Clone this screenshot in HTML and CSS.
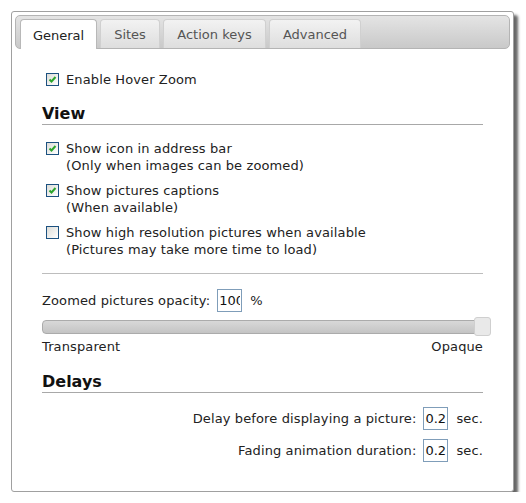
FILE: index.html
```html
<!DOCTYPE html>
<html>
<head>
<meta charset="utf-8">
<link rel="stylesheet" href="styles.css">
</head>
<body>
<div class="window">
  <div class="tabbar">
    <div class="tab active">General</div>
    <div class="tab t-sites">Sites</div>
    <div class="tab t-keys">Action keys</div>
    <div class="tab t-adv">Advanced</div>
  </div>
  <div class="content">
    <div class="check first">
      <span class="box on"><svg viewBox="0 0 13 13" width="13" height="13"><path d="M3.5 6.5 L5.5 8.5 L9.5 4" fill="none" stroke="#2ca52c" stroke-width="2"/></svg></span>
      <span class="label">Enable Hover Zoom</span>
    </div>

    <h2 class="heading view">View</h2>

    <div class="check">
      <span class="box on"><svg viewBox="0 0 13 13" width="13" height="13"><path d="M3.5 6.5 L5.5 8.5 L9.5 4" fill="none" stroke="#2ca52c" stroke-width="2"/></svg></span>
      <span class="label">Show icon in address bar<br>(Only when images can be zoomed)</span>
    </div>
    <div class="check">
      <span class="box on"><svg viewBox="0 0 13 13" width="13" height="13"><path d="M3.5 6.5 L5.5 8.5 L9.5 4" fill="none" stroke="#2ca52c" stroke-width="2"/></svg></span>
      <span class="label">Show pictures captions<br>(When available)</span>
    </div>
    <div class="check">
      <span class="box"></span>
      <span class="label">Show high resolution pictures when available<br>(Pictures may take more time to load)</span>
    </div>

    <div class="rule"></div>

    <div class="opacity-row">
      <span>Zoomed pictures opacity:</span>
      <input class="num" type="text" value="100">
      <span>%</span>
    </div>
    <div class="slider">
      <div class="track"></div>
      <div class="thumb"></div>
    </div>
    <div class="slider-labels">
      <span>Transparent</span>
      <span>Opaque</span>
    </div>

    <h2 class="heading delays">Delays</h2>

    <div class="delay-row">
      <span>Delay before displaying a picture:</span>
      <input class="num" type="text" value="0.2">
      <span>sec.</span>
    </div>
    <div class="delay-row">
      <span>Fading animation duration:</span>
      <input class="num" type="text" value="0.2">
      <span>sec.</span>
    </div>
  </div>
</div>
</body>
</html>
```
FILE: styles.css
```css
html, body {
  margin: 0;
  padding: 0;
  background: #ffffff;
}
body {
  font-family: "DejaVu Sans", Verdana, sans-serif;
  font-size: 13px;
  letter-spacing: 0.12px;
  color: #222;
}
.window {
  box-sizing: border-box;
  margin: 11px 0 0 11px;
  width: 503px;
  height: 481px;
  border: 1px solid #a0a0a0;
  border-radius: 3px;
  padding: 3px;
  background: #fff;
  box-shadow: 4px 4px 3px rgba(0, 0, 0, 0.6);
}
.tabbar {
  box-sizing: border-box;
  height: 34px;
  border: 1px solid #b4b4b4;
  border-radius: 5px;
  background: linear-gradient(#e4e4e4, #c9c9c9);
  display: flex;
  align-items: flex-end;
  padding-left: 4px;
  gap: 3px;
}
.tab {
  box-sizing: border-box;
  height: 29px;
  border-radius: 4px 4px 0 0;
  background: linear-gradient(#f2f2f2, #dedede);
  border: 1px solid #d0d0d0;
  border-bottom: none;
  color: #555;
  display: flex;
  align-items: center;
  justify-content: center;
  padding-top: 1px;
  letter-spacing: 0;
}
.tab.active {
  width: 77px;
  background: #fff;
  border-color: #b8b8b8;
  color: #222;
  height: 30px;
  margin-bottom: -1px;
}
.t-sites { width: 60px; }
.t-keys { width: 103px; }
.t-adv { width: 92px; }
.content {
  padding: 0 27px;
}
.check {
  display: flex;
  align-items: flex-start;
  margin-top: 8px;
  line-height: 17px;
}
.check.first {
  margin-top: 22px;
}
.box {
  box-sizing: border-box;
  flex: none;
  width: 13px;
  height: 13px;
  margin: 2px 7px 0 4px;
  border: 1px solid #1c5180;
  background: linear-gradient(135deg, #dcdcd7, #ffffff);
  display: flex;
}
.box svg {
  display: block;
  margin: -1px;
}
.heading {
  margin: 17px 0 15px;
  font-size: 16px;
  font-weight: bold;
  line-height: 18px;
  letter-spacing: 0;
  border-bottom: 1px solid #a8a8a8;
  padding-bottom: 1px;
  color: #111;
}
.rule {
  height: 1px;
  background: #bdbdbd;
  margin: 15px 0 15px;
}
.opacity-row, .delay-row {
  display: flex;
  align-items: center;
  gap: 6px;
  line-height: 17px;
}
.num {
  box-sizing: border-box;
  width: 25px;
  height: 23px;
  border: 1px solid #7f9db9;
  padding: 0 1px;
  font-family: "DejaVu Sans", Verdana, sans-serif;
  font-size: 13px;
  color: #111;
  margin: 0 2px 0 1px;
  background: #fff;
}
.slider {
  position: relative;
  margin-top: 8px;
  height: 14px;
}
.track {
  box-sizing: border-box;
  height: 14px;
  border: 1px solid #ababab;
  border-radius: 4px;
  background: linear-gradient(#d8d8d8, #c4c4c4);
  margin-right: 4px;
}
.thumb {
  position: absolute;
  right: -8px;
  top: -3px;
  box-sizing: border-box;
  width: 17px;
  height: 19px;
  border: 1px solid #cfcfcf;
  border-radius: 3px;
  background: #e9e9e9;
}
.slider-labels {
  display: flex;
  justify-content: space-between;
  margin-top: 4px;
  line-height: 17px;
}
.heading.delays {
  margin: 18px 0 14px;
}
.delay-row {
  justify-content: flex-end;
  margin-bottom: 9px;
}
```
